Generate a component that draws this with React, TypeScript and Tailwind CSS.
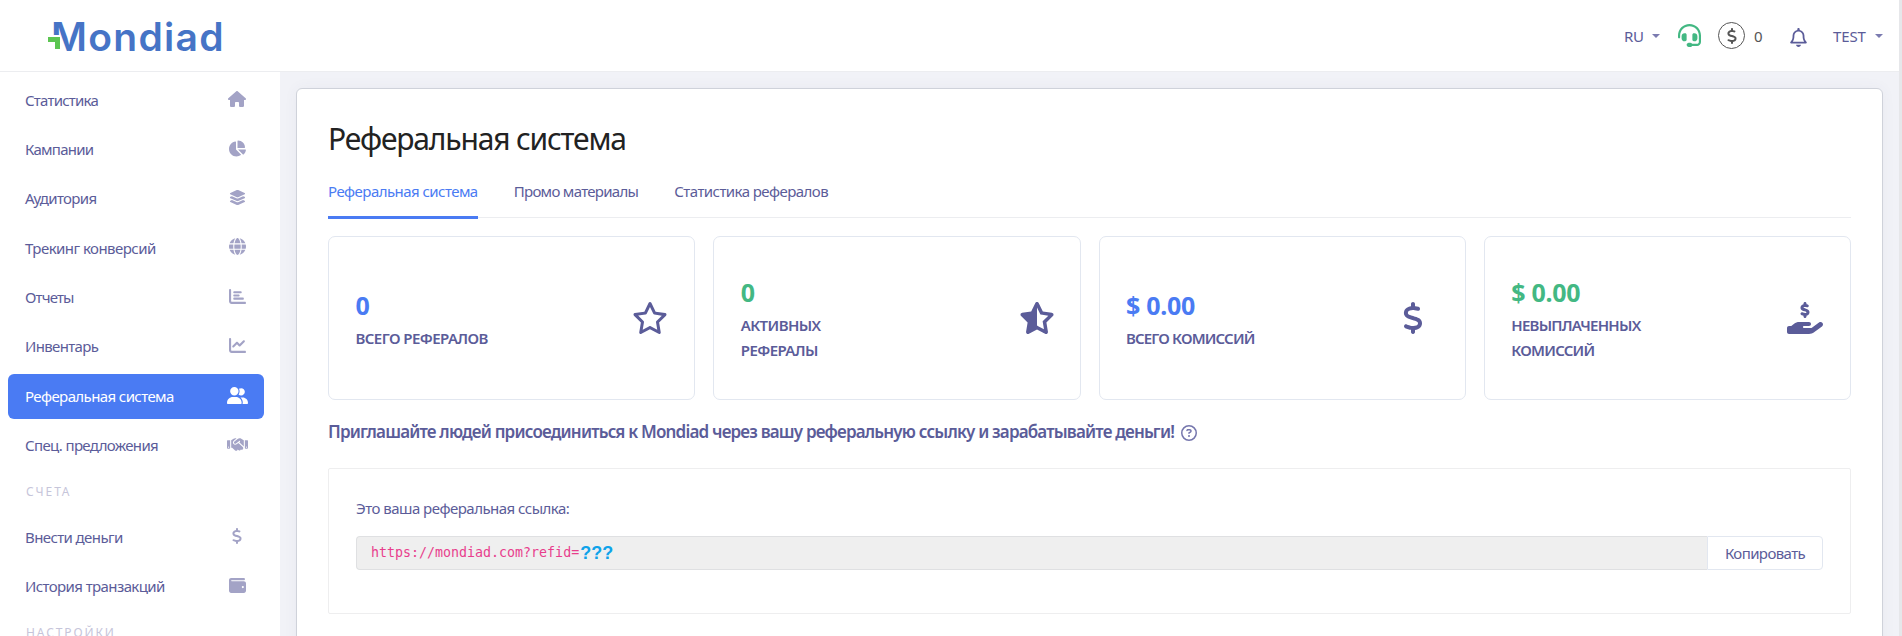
import type { IconType } from "react-icons";
import {
  FaHouse,
  FaChartPie,
  FaLayerGroup,
  FaGlobe,
  FaChartBar,
  FaChartLine,
  FaUserGroup,
  FaHandshake,
  FaDollarSign,
  FaWallet,
  FaHeadset,
  FaRegBell,
  FaRegStar,
  FaStarHalfStroke,
  FaHandHoldingDollar,
  FaRegCircleQuestion,
} from "react-icons/fa6";

type NavItem = { label: string; icon: IconType; size: string; track: string; active?: boolean };

const mainNav: NavItem[] = [
  { label: "Статистика", icon: FaHouse, size: "h-4 w-[18px]", track: "tracking-[-0.77px]" },
  { label: "Кампании", icon: FaChartPie, size: "h-[17px] w-[18px]", track: "tracking-[-0.75px]" },
  { label: "Аудитория", icon: FaLayerGroup, size: "h-[17px] w-[17px]", track: "tracking-[-0.66px]" },
  { label: "Трекинг конверсий", icon: FaGlobe, size: "h-[17px] w-[17px]", track: "tracking-[-0.54px]" },
  { label: "Отчеты", icon: FaChartBar, size: "h-[17px] w-[17px]", track: "tracking-[-0.85px]" },
  { label: "Инвентарь", icon: FaChartLine, size: "h-[17px] w-[17px]", track: "tracking-[-0.66px]" },
  { label: "Реферальная система", icon: FaUserGroup, size: "h-[17px] w-[21px]", track: "tracking-[-0.6px]", active: true },
  { label: "Спец. предложения", icon: FaHandshake, size: "h-[17px] w-[21px]", track: "tracking-[-0.65px]" },
];

const billingNav: NavItem[] = [
  { label: "Внести деньги", icon: FaDollarSign, size: "h-4 w-[10px]", track: "tracking-[-0.6px]" },
  { label: "История транзакций", icon: FaWallet, size: "h-[17px] w-[17px]", track: "tracking-[-0.6px]" },
];

const tabs = [
  { label: "Реферальная система", track: "tracking-[-0.55px]", active: true },
  { label: "Промо материалы", track: "tracking-[-0.7px]" },
  { label: "Статистика рефералов", track: "tracking-[-0.56px]" },
];

const stats = [
  {
    value: "0",
    color: "text-[#4a7bf3]",
    lines: ["ВСЕГО РЕФЕРАЛОВ"],
    track: "tracking-[-0.58px]",
    icon: <FaRegStar className="mr-[-1px] h-8 w-9" />,
  },
  {
    value: "0",
    color: "text-[#43b883]",
    lines: ["АКТИВНЫХ", "РЕФЕРАЛЫ"],
    track: "tracking-[-0.6px]",
    icon: <FaStarHalfStroke className="mr-[-2px] h-8 w-9" />,
  },
  {
    value: "$ 0.00",
    color: "text-[#4a7bf3]",
    lines: ["ВСЕГО КОМИССИЙ"],
    track: "tracking-[-0.85px]",
    icon: <FaDollarSign className="mr-[15px] h-8 w-5" />,
  },
  {
    value: "$ 0.00",
    color: "text-[#43b883]",
    lines: ["НЕВЫПЛАЧЕННЫХ", "КОМИССИЙ"],
    track: "tracking-[-0.75px]",
    icon: <FaHandHoldingDollar className="h-8 w-9" />,
  },
];

function Logo() {
  return (
    <div className="relative mt-[3px] ml-12 h-[40px] w-[180px] font-['Inter'] text-[39px] leading-[40px] font-semibold text-[#4674c6]">
      <span className="ml-[3px] tracking-[1.3px]">Mondiad</span>
      {/* green corner replaces the lower half of the first stem */}
      <span className="absolute top-[18px] left-0 h-[17px] w-[12px] bg-white" />
      <span className="absolute top-[20px] left-0 h-[5px] w-[12px] bg-[#5cc552]" />
      <span className="absolute top-[20px] left-[7px] h-[12px] w-[5px] bg-[#5cc552]" />
    </div>
  );
}

function Caret() {
  return <span className="h-0 w-0 border-x-4 border-t-4 border-x-transparent border-t-[#7b7bb0]" />;
}

function Header() {
  return (
    <header className="flex h-[72px] shrink-0 items-center justify-between border-b border-[#ecedf0] bg-white">
      <Logo />
      <div className="flex items-center pr-[16px] text-[15px] text-[#5b5c99]">
        <span className="mt-[2px] w-[28px] tracking-[-0.3px]">RU</span>
        <Caret />
        <FaHeadset className="ml-[18px] h-[23px] w-[23px] text-[#43b883]" />
        <span className="ml-[17px] flex h-[27px] w-[27px] items-center justify-center rounded-full border border-[#555] text-[#555]">
          <FaDollarSign className="h-4 w-4" />
        </span>
        <span className="mt-[2px] ml-[9px] w-[36px] text-[#555]">0</span>
        <FaRegBell className="mt-[3px] h-[19px] w-[17px]" />
        <span className="mt-[2px] ml-[26px] w-[42px] tracking-[-0.1px]">TEST</span>
        <Caret />
      </div>
    </header>
  );
}

function NavLink({ item }: { item: NavItem }) {
  const Icon = item.icon;
  return (
    <li
      className={`mx-2 mb-1 flex h-[45.4px] w-[256px] items-center justify-between rounded-[6px] pr-[15px] pl-[17px] ${
        item.active ? "bg-[#4a7bf3] text-white" : "text-[#5b5c99]"
      }`}
    >
      <span className={`pb-px whitespace-nowrap ${item.track}`}>{item.label}</span>
      <span className={`mb-[3px] flex w-6 justify-center ${item.active ? "text-white" : "text-[#a3a3c6]"}`}>
        <Icon className={item.size} />
      </span>
    </li>
  );
}

function NavTitle({ children }: { children: string }) {
  return (
    <div className="flex h-[42px] items-center pb-[3px] pl-[26px] text-[12px] leading-[14px] tracking-[1.9px] text-[#c6c5da]">
      {children}
    </div>
  );
}

function Sidebar() {
  return (
    <aside className="w-[280px] shrink-0 bg-white pt-[5.6px] text-[15px]">
      <ul>
        {mainNav.map((item) => (
          <NavLink key={item.label} item={item} />
        ))}
      </ul>
      <NavTitle>СЧЕТА</NavTitle>
      <ul>
        {billingNav.map((item) => (
          <NavLink key={item.label} item={item} />
        ))}
      </ul>
      <NavTitle>НАСТРОЙКИ</NavTitle>
    </aside>
  );
}

export default function App() {
  return (
    <div className="flex h-[636px] w-full overflow-hidden border-r-[3px] border-[#e6e7ea] bg-[#f1f2f7] font-['Noto_Sans','Open_Sans',sans-serif] text-[#5b5c99]">
      <div className="flex min-w-0 flex-1 flex-col">
        <Header />
        <div className="flex min-h-0 flex-1">
          <Sidebar />
          <main className="min-w-0 flex-1 pt-4 pr-4 pl-4">
            <section className="h-[700px] rounded-[6px] border border-[#cfd2da] bg-white px-[31px] shadow-[0_0_14px_rgba(70,70,110,0.05)]">
              <h1 className="pt-[29px] text-[30px] leading-[42px] tracking-[-1.18px] text-[#222]">Реферальная система</h1>

              <div className="mt-[8px] flex h-[50px] gap-9 border-b border-[#ecedf0] text-[15px]">
                {tabs.map((tab) => (
                  <div
                    key={tab.label}
                    className={`flex h-[51px] items-center border-b-[3px] pb-[2px] whitespace-nowrap ${tab.track} ${
                      tab.active ? "border-[#4a7bf3] text-[#4a7bf3]" : "border-transparent"
                    }`}
                  >
                    {tab.label}
                  </div>
                ))}
              </div>

              <div className="mt-[18px] grid grid-cols-4 gap-[18px]">
                {stats.map((stat) => (
                  <div
                    key={stat.lines[0]}
                    className="flex h-[164px] items-center justify-between rounded-[7px] border border-[#e2e7f0] pr-[27px] pb-px pl-[26.5px]"
                  >
                    <div className="font-semibold">
                      <div className={`text-[25px] leading-[41px] font-bold tracking-[-0.3px] ${stat.color}`}>
                        {stat.value}
                      </div>
                      {stat.lines.map((line) => (
                        <div key={line} className={`text-[15px] leading-[25px] ${stat.track}`}>
                          {line}
                        </div>
                      ))}
                    </div>
                    {stat.icon}
                  </div>
                ))}
              </div>

              <div className="flex h-[68px] items-center pb-1 text-[17px] font-semibold">
                <span className="tracking-[-0.82px] whitespace-nowrap">
                  Приглашайте людей присоединиться к Mondiad через вашу реферальную ссылку и зарабатывайте деньги!
                </span>
                <FaRegCircleQuestion className="mt-[2px] ml-[7px] h-4 w-4 text-[#7576ad]" />
              </div>

              <div className="h-[146px] rounded-[2px] border border-[#eeeeef] px-[27px] pt-[26px] text-[15px]">
                <p className="leading-[26px] tracking-[-0.52px]">Это ваша реферальная ссылка:</p>
                <div className="mt-[15px] flex h-[34px]">
                  <div className="flex flex-1 items-center rounded-l-[4px] border border-r-0 border-[#dfe0e2] bg-[#efefef] pl-[14px]">
                    <code className="font-['DejaVu_Sans_Mono',monospace] text-[13.3px] text-[#e83e8c]">
                      https://mondiad.com?refid=
                    </code>
                    <b className="ml-px font-['Liberation_Sans',Arial,sans-serif] text-[18px] text-[#0fa3ea]">???</b>
                  </div>
                  <button className="w-[116px] rounded-r-[4px] border border-[#e2e7f0] bg-white tracking-[-0.6px]">
                    Копировать
                  </button>
                </div>
              </div>
            </section>
          </main>
        </div>
      </div>
    </div>
  );
}
